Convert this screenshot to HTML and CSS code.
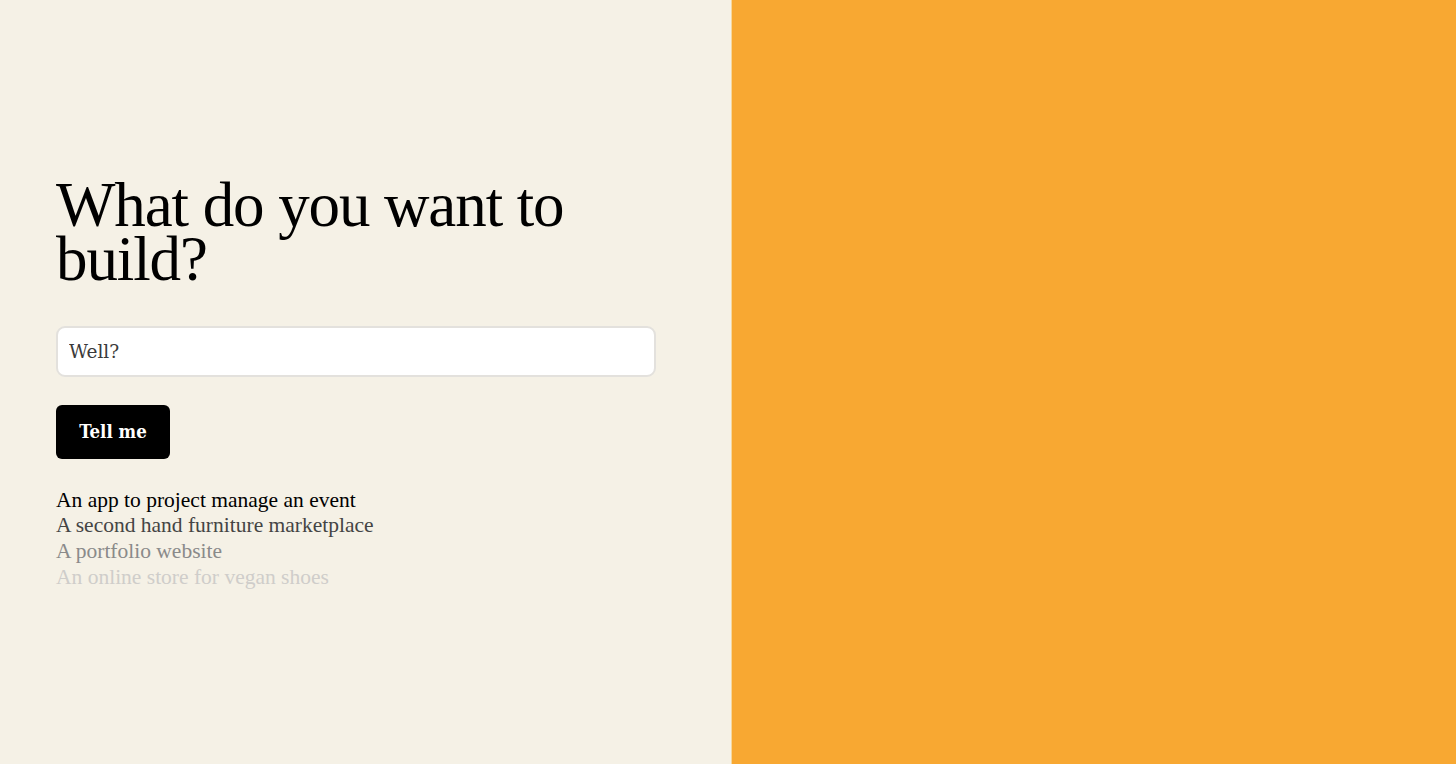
FILE: index.html
```html
<!DOCTYPE html>
<html lang="en">
<head>
<meta charset="utf-8">
<title>What do you want to build?</title>
<link rel="stylesheet" href="styles.css">
</head>
<body>
<div class="page">
  <main class="left">
    <div class="content">
      <h1 class="title">What do you want to build?</h1>
      <form class="form">
        <input class="field" type="text" placeholder="Well?">
        <button class="btn" type="button">Tell me</button>
      </form>
      <ul class="ideas">
        <li class="idea idea-1">An app to project manage an event</li>
        <li class="idea idea-2">A second hand furniture marketplace</li>
        <li class="idea idea-3">A portfolio website</li>
        <li class="idea idea-4">An online store for vegan shoes</li>
      </ul>
    </div>
  </main>
  <aside class="right"></aside>
</div>
</body>
</html>
```
FILE: styles.css
```css
* { box-sizing: border-box; }
html, body { margin: 0; padding: 0; height: 100%; }
body { font-family: "Liberation Serif", "DejaVu Serif", serif; }
.page { display: flex; height: 764px; }
.left {
  width: 731px;
  background: #f5f1e6;
  display: flex;
  align-items: center;
  padding-left: 56px;
}
.right {
  flex: 1;
  background: #f8a832;
  border-left: 1px solid #f7d79a;
}
.content { width: 600px; margin-top: 4px; }
.title {
  font-family: "Liberation Serif", serif;
  font-weight: 400;
  font-size: 63px;
  line-height: 54px;
  letter-spacing: -1.1px;
  margin: 0 0 40px;
  color: #000;
  width: 560px;
}
.form { display: flex; flex-direction: column; align-items: flex-start; gap: 28px; margin: 0; }
.field {
  width: 600px;
  height: 51px;
  border: 2px solid #e3e1dd;
  border-radius: 9px;
  background: #fff;
  padding: 0 11px;
  font-family: "DejaVu Serif", serif;
  font-size: 18.5px;
  color: #333;
  outline: none;
}
.field::placeholder { color: #3a3a3a; }
.btn {
  width: 114px;
  height: 54px;
  background: #000;
  color: #fff;
  border: none;
  border-radius: 6px;
  font-family: "DejaVu Serif Condensed", "DejaVu Serif", serif;
  font-size: 18.5px;
  font-weight: 700;
  padding: 0;
}
.ideas { list-style: none; margin: 29px 0 0; padding: 0; }
.idea {
  font-family: "Liberation Serif", serif;
  font-size: 21.5px;
  line-height: 25.7px;
}
.idea-1 { color: #000; }
.idea-2 { color: #444; }
.idea-3 { color: #8a8a8a; }
.idea-4 { color: #cfcdca; }
```
